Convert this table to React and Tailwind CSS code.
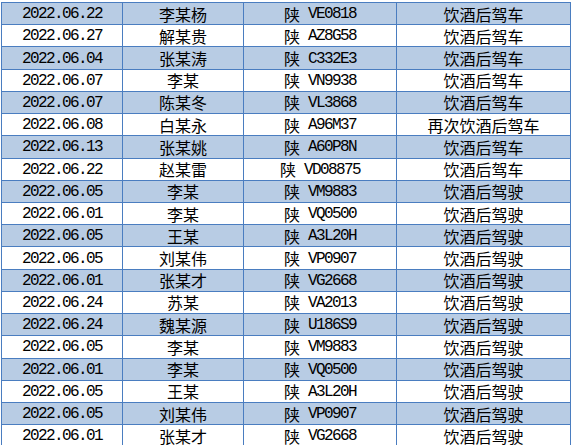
const rows = [
  ["2022.06.22", "李某杨", "VE0818", "饮酒后驾车"],
  ["2022.06.27", "解某贵", "AZ8G58", "饮酒后驾车"],
  ["2022.06.04", "张某涛", "C332E3", "饮酒后驾车"],
  ["2022.06.07", "李某", "VN9938", "饮酒后驾车"],
  ["2022.06.07", "陈某冬", "VL3868", "饮酒后驾车"],
  ["2022.06.08", "白某永", "A96M37", "再次饮酒后驾车"],
  ["2022.06.13", "张某姚", "A60P8N", "饮酒后驾车"],
  ["2022.06.22", "赵某雷", "VD08875", "饮酒后驾车"],
  ["2022.06.05", "李某", "VM9883", "饮酒后驾驶"],
  ["2022.06.01", "李某", "VQ0500", "饮酒后驾驶"],
  ["2022.06.05", "王某", "A3L20H", "饮酒后驾驶"],
  ["2022.06.05", "刘某伟", "VP0907", "饮酒后驾驶"],
  ["2022.06.01", "张某才", "VG2668", "饮酒后驾驶"],
  ["2022.06.24", "苏某", "VA2013", "饮酒后驾驶"],
  ["2022.06.24", "魏某源", "U186S9", "饮酒后驾驶"],
  ["2022.06.05", "李某", "VM9883", "饮酒后驾驶"],
  ["2022.06.01", "李某", "VQ0500", "饮酒后驾驶"],
  ["2022.06.05", "王某", "A3L20H", "饮酒后驾驶"],
  ["2022.06.05", "刘某伟", "VP0907", "饮酒后驾驶"],
  ["2022.06.01", "张某才", "VG2668", "饮酒后驾驶"],
];

const mono = "font-['Liberation_Mono',monospace] text-[16px] tracking-[-1.6px] pt-[1px]";
const cjk = "font-['Noto_Sans_CJK_SC',sans-serif] text-[16px]";

export default function App() {
  return (
    <div className="w-[573px] h-[445px] overflow-hidden bg-white">
      <div className="ml-[1px] mt-[2px] w-[570px] border-t border-l border-[#4a7dc0] text-black">
        {rows.map((r, i) => (
          <div
            key={i}
            className={`flex h-[22.22px] border-b border-[#4a7dc0] leading-none ${
              i % 2 === 0 ? "bg-[#b8cce4]" : "bg-white"
            }`}
          >
            <div className={`w-[121px] shrink-0 border-r border-[#4a7dc0] flex items-center justify-center ${mono}`}>
              {r[0]}
            </div>
            <div className={`w-[121px] shrink-0 border-r border-[#4a7dc0] flex items-center justify-center ${cjk}`}>
              {r[1]}
            </div>
            <div className="w-[153px] shrink-0 border-r border-[#4a7dc0] flex items-center justify-center">
              <span className={cjk}>陕</span>
              <span className={`${mono} whitespace-pre`}>{" " + r[2]}</span>
            </div>
            <div className={`w-[174px] shrink-0 border-r border-[#4a7dc0] flex items-center justify-center ${cjk}`}>
              {r[3]}
            </div>
          </div>
        ))}
      </div>
    </div>
  );
}
